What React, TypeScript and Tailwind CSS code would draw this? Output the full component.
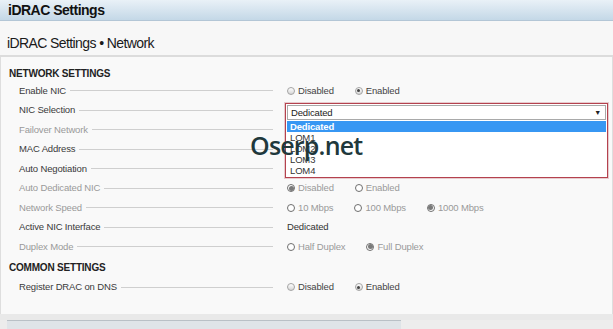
import React from 'react'

type Tone = 'active' | 'muted'

const FONT = { fontFamily: '"Liberation Sans", Arial, sans-serif' }

function Radio({ checked, tone }: { checked?: boolean; tone: Tone }) {
  if (tone === 'active') {
    return (
      <span className="relative flex h-[8px] w-[8px] items-center justify-center rounded-full border border-[#a4a4a4] bg-gradient-to-b from-[#ffffff] to-[#d6d6d6]">
        {checked && <span className="h-[3px] w-[3px] rounded-full bg-[#444]" />}
      </span>
    )
  }
  return (
    <span className="flex h-[8px] w-[8px] items-center justify-center rounded-full border border-[#6f6f6f] bg-white">
      {checked && <span className="h-[5px] w-[5px] rounded-full bg-[#7a7a7a]" />}
    </span>
  )
}

function Radios({ items, checked, tone }: { items: string[]; checked: number; tone: Tone }) {
  return (
    <div className={`flex items-center gap-[21px] ${tone === 'active' ? 'text-[#444]' : 'text-[#9a9a9a]'}`}>
      {items.map((it, i) => (
        <div key={it} className="flex items-center gap-[3px]">
          <Radio checked={i === checked} tone={tone} />
          <span>{it}</span>
        </div>
      ))}
    </div>
  )
}

function Row({ label, tone = 'active', children }: { label: string; tone?: Tone; children?: React.ReactNode }) {
  return (
    <div className="flex h-[19.5px] shrink-0 items-center pl-[18px]">
      <div className="flex w-[254px] items-center gap-[4px]">
        <span className={tone === 'active' ? 'text-[#3a3a3a]' : 'text-[#9a9a9a]'}>{label}</span>
        <span className="h-px flex-1 bg-[#cfcfcf]" />
      </div>
      <div className="relative ml-[14px] flex flex-1 items-center">{children}</div>
    </div>
  )
}

function Heading({ children, className }: { children: React.ReactNode; className: string }) {
  return (
    <div className={`flex shrink-0 items-center pl-[8px] text-[10px] font-bold tracking-[-0.2px] text-[#222] ${className}`}>
      {children}
    </div>
  )
}

function NicDropdown() {
  return (
    <div className="absolute left-[-2px] top-[-7px] z-10 w-[323px] border border-[#b4424e] bg-white p-px shadow-[0_0_0_1px_rgba(180,66,78,0.25)]">
      <div className="flex h-[15px] items-center justify-between border border-[#a9a9a9] bg-white pl-[3px] pr-[4px] text-[#222]">
        <span>Dedicated</span>
        <span className="text-[7px] leading-none">▼</span>
      </div>
      <div className="flex flex-col pt-px">
        <div className="flex h-[11px] items-center bg-[#3797f3] pl-[3px] font-bold text-white">Dedicated</div>
        {['LOM1', 'LOM2', 'LOM3', 'LOM4'].map((o) => (
          <div key={o} className="flex h-[11px] items-center pl-[3px] text-[#333]">{o}</div>
        ))}
      </div>
    </div>
  )
}

export default function App() {
  return (
    <div className="relative flex h-[329px] w-[613px] flex-col overflow-hidden bg-[#ececec] text-[9.5px] tracking-[-0.15px]" style={FONT}>
      <div className="flex h-[21px] shrink-0 items-center border-b border-[#b3c6d6] bg-gradient-to-b from-[#e9f1f7] to-[#c4d8e7] pl-[8px] text-[14px] font-bold tracking-[-0.5px] text-[#111]">
        iDRAC Settings
      </div>

      <div className="flex h-[36px] shrink-0 items-end border-b-2 border-[#dcdcdc] bg-[#f7f7f7] pb-px pl-[7px] text-[14px] tracking-[-0.6px] text-[#1a1a1a]">
        iDRAC Settings • Network
      </div>

      <div className="flex h-[257px] shrink-0 flex-col border-r border-l border-[#dedede] bg-[#f9f9f9] pt-[9px]">
        <Heading className="h-[15px]">NETWORK SETTINGS</Heading>
        <Row label="Enable NIC">
          <Radios items={['Disabled', 'Enabled']} checked={1} tone="active" />
        </Row>
        <Row label="NIC Selection">
          <NicDropdown />
        </Row>
        <Row label="Failover Network" tone="muted" />
        <Row label="MAC Address" />
        <Row label="Auto Negotiation" />
        <Row label="Auto Dedicated NIC" tone="muted">
          <Radios items={['Disabled', 'Enabled']} checked={0} tone="muted" />
        </Row>
        <Row label="Network Speed" tone="muted">
          <Radios items={['10 Mbps', '100 Mbps', '1000 Mbps']} checked={2} tone="muted" />
        </Row>
        <Row label="Active NIC Interface">
          <span className="text-[#333]">Dedicated</span>
        </Row>
        <Row label="Duplex Mode" tone="muted">
          <Radios items={['Half Duplex', 'Full Duplex']} checked={1} tone="muted" />
        </Row>
        <Heading className="h-[21px]">COMMON SETTINGS</Heading>
        <Row label="Register DRAC on DNS">
          <Radios items={['Disabled', 'Enabled']} checked={1} tone="active" />
        </Row>
      </div>

      <div className="h-[6px] shrink-0 bg-[#e9e9e9]" />
      <div className="flex flex-1">
        <div className="ml-[7px] w-[394px] border-t border-[#b9c0c6] bg-[#dfe4e8]" />
        <div className="flex-1 bg-[#ededed]" />
      </div>

      <div
        className="pointer-events-none absolute left-[250px] top-[133px] z-20 text-[25px] font-semibold leading-none tracking-[-0.8px] text-[#20383c]"
        style={{ fontFamily: '"Open Sans", "Noto Sans", sans-serif' }}
      >
        Oserp.net
      </div>
    </div>
  )
}
